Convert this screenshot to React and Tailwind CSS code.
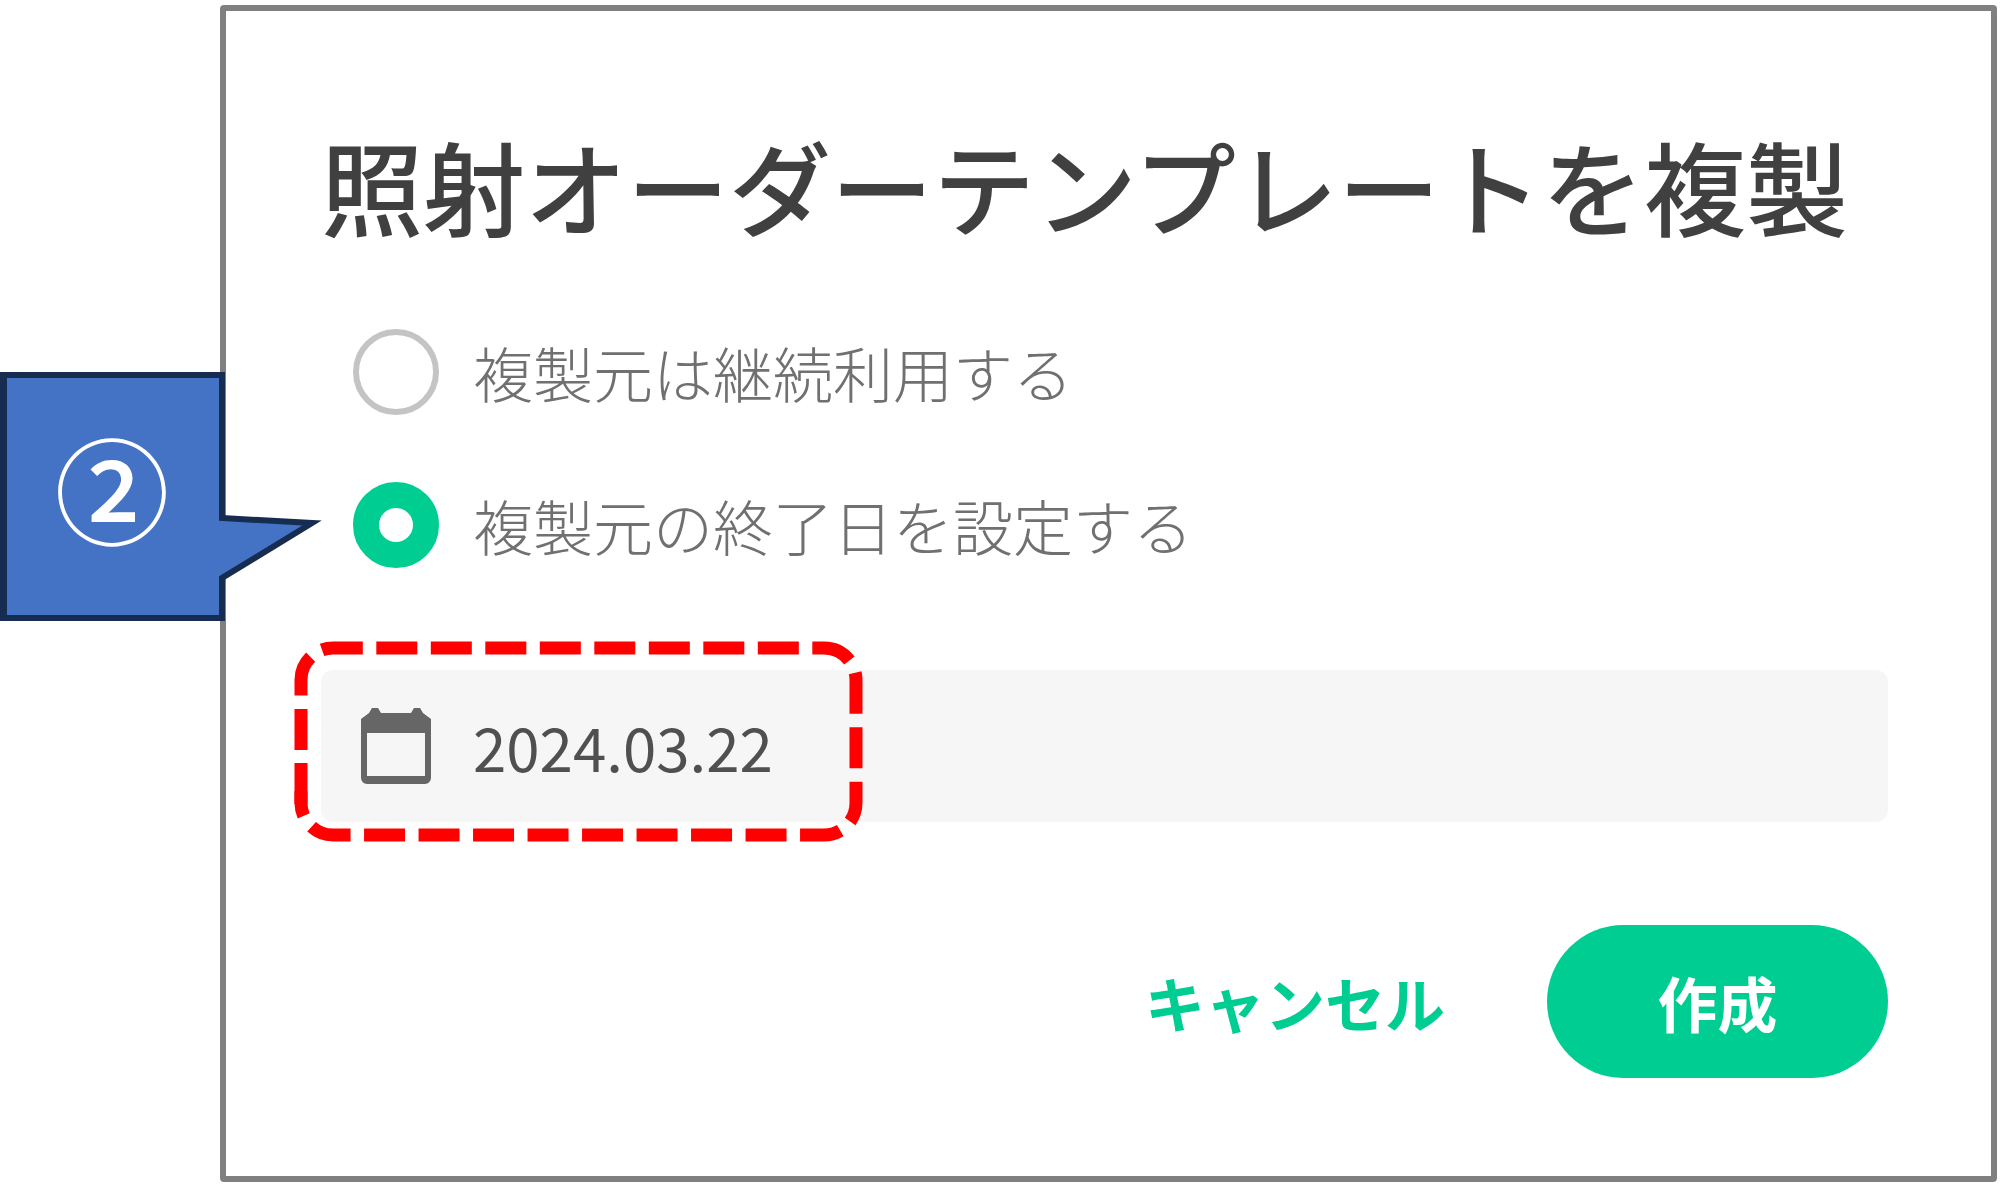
import { useState } from "react";

const OPTIONS = [
  { value: "continue", label: "複製元は継続利用する" },
  { value: "end", label: "複製元の終了日を設定する" },
];

function CalendarIcon() {
  return (
    <svg className="w-[70px] h-[76px] flex-shrink-0" viewBox="0 0 70 76" aria-hidden="true">
      <path
        fill="#666666"
        fillRule="evenodd"
        d="M11 0H17L20 5H50L53 0H59L62 5L70 11V70A6 6 0 0 1 64 76H6A6 6 0 0 1 0 70V11L8 5ZM6 25V68H64V25Z"
      />
    </svg>
  );
}

// Dashed frame around the date
function Highlight() {
  return (
    <svg
      className="absolute -left-[27px] -top-[29px] w-[569px] h-[201px] pointer-events-none"
      viewBox="0 0 569 201"
      fill="none"
      stroke="#ff0000"
      strokeWidth="13"
      aria-hidden="true"
    >
      <path
        strokeDasharray="41 13.5"
        d="M7 109V39A32 32 0 0 1 39 7H530A32 32 0 0 1 562 39V162A32 32 0 0 1 530 194H39A32 32 0 0 1 7 162V150"
      />
      <path d="M7 163V122" />
    </svg>
  );
}

// Numbered balloon pointing at the selected option
function Callout({ number }) {
  return (
    <div className="absolute left-0 top-[372px] w-[324px] h-[249px] pointer-events-none">
      <svg className="absolute inset-0 w-full h-full" viewBox="0 0 324 249" aria-hidden="true">
        <path
          d="M4 3H222V146L312 151L222 206V246H4Z"
          fill="#4472c4"
          stroke="#172c51"
          strokeWidth="6"
          strokeMiterlimit="10"
        />
        <path d="M0 0H7V249H0Z" fill="#172c51" />
      </svg>
      <div className="relative w-[224px] h-full pb-5 flex items-center justify-center text-[115px] leading-none font-medium text-white">
        {number}
      </div>
    </div>
  );
}

function App() {
  const [mode, setMode] = useState("end");
  const [date, setDate] = useState("2024.03.22");

  return (
    <main className="relative bg-white pl-[220px] pr-[3px] pt-[5px] font-['Noto_Sans_CJK_JP',sans-serif]">
      <form
        className="border-[6px] border-[#808080] rounded-sm bg-white pl-[95px] pr-[103px] pt-[114px] pb-[98px]"
        onSubmit={(e) => e.preventDefault()}
      >
        <h1 className="text-[102px] leading-[120px] font-medium text-[#404040] whitespace-nowrap">
          照射オーダーテンプレートを複製
        </h1>

        {/* Options */}
        <div className="mt-[84px] pl-8 flex flex-col gap-[67px]">
          {OPTIONS.map((option) => (
            <label key={option.value} className="flex items-center gap-[34px] h-[86px]">
              <input
                type="radio"
                name="mode"
                value={option.value}
                checked={mode === option.value}
                onChange={() => setMode(option.value)}
                className="appearance-none flex-shrink-0 w-[86px] h-[86px] rounded-full bg-white border-[6px] border-[#c4c4c4] checked:border-[26px] checked:border-[#00cd92]"
              />
              <span className="text-[60px] leading-[80px] font-light text-[#707070] whitespace-nowrap">
                {option.label}
              </span>
            </label>
          ))}
        </div>

        {/* End date */}
        <div className="relative mt-[102px]">
          <label className="flex items-center gap-[42px] h-[152px] pl-10 pr-10 rounded-xl bg-[#f6f6f6]">
            <CalendarIcon />
            <input
              type="text"
              aria-label="終了日"
              value={date}
              onChange={(e) => setDate(e.target.value)}
              className="flex-1 min-w-0 bg-transparent outline-none text-[60px] leading-[80px] text-[#505050]"
            />
          </label>
          <Highlight />
        </div>

        {/* Actions */}
        <div className="mt-[103px] flex items-center justify-end gap-[102px]">
          <button type="button" className="text-[60px] leading-[80px] font-bold text-[#00cd92]">
            キャンセル
          </button>
          <button
            type="submit"
            className="w-[341px] h-[153px] rounded-full bg-[#00cd92] text-[60px] leading-[80px] font-bold text-white"
          >
            作成
          </button>
        </div>
      </form>

      <Callout number="②" />
    </main>
  );
}

export default App;
